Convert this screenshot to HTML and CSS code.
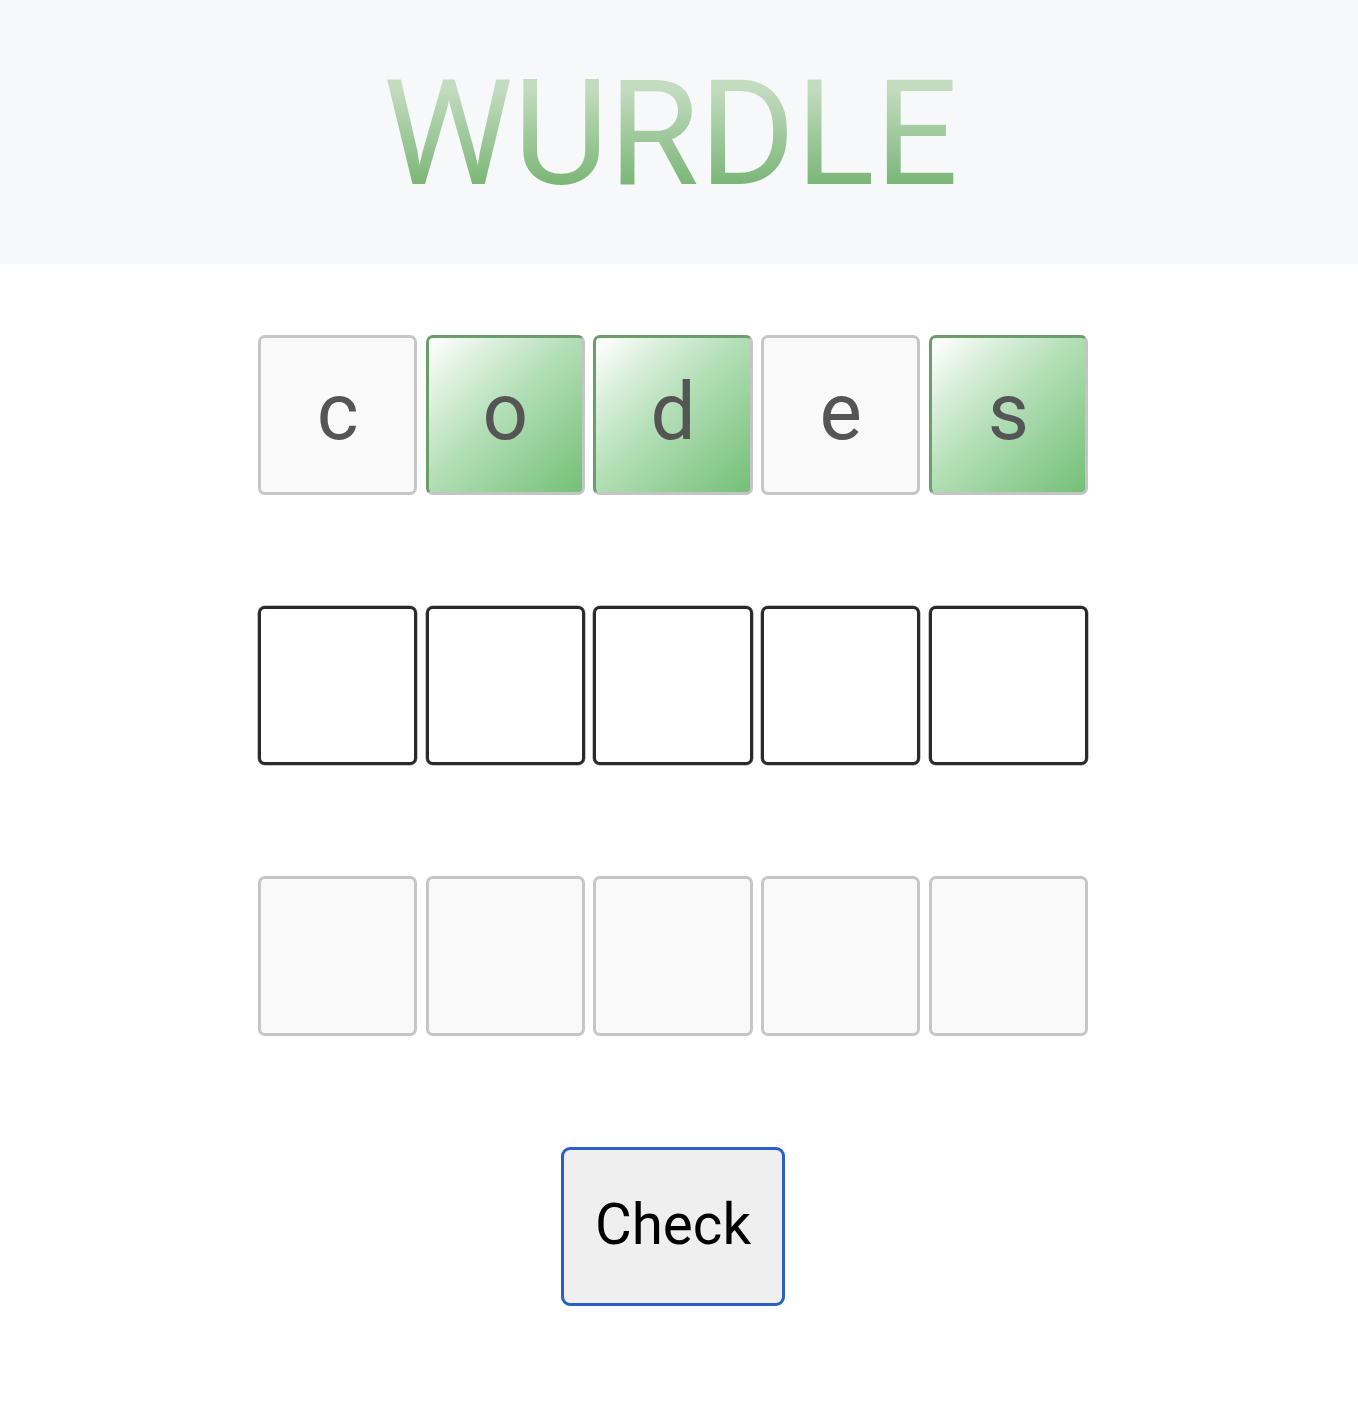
FILE: index.html
```html
<!DOCTYPE html>
<html lang="en">
<head>
<meta charset="utf-8">
<title>Wurdle</title>
<link rel="stylesheet" href="styles.css">
</head>
<body>
<header class="header">
  <h1 class="title">WURDLE</h1>
</header>
<main class="game">
  <div class="board">
    <div class="row">
      <div class="tile">c</div>
      <div class="tile correct">o</div>
      <div class="tile correct">d</div>
      <div class="tile">e</div>
      <div class="tile correct">s</div>
    </div>
    <div class="row">
      <div class="tile active"></div>
      <div class="tile active"></div>
      <div class="tile active"></div>
      <div class="tile active"></div>
      <div class="tile active"></div>
    </div>
    <div class="row">
      <div class="tile"></div>
      <div class="tile"></div>
      <div class="tile"></div>
      <div class="tile"></div>
      <div class="tile"></div>
    </div>
  </div>
  <button class="check" type="button">Check</button>
</main>
</body>
</html>
```
FILE: styles.css
```css
* { box-sizing: border-box; }
html, body { margin: 0; padding: 0; background: #ffffff; }
body { font-family: Roboto, "Liberation Sans", sans-serif; }

.header {
  background: #f7f8fa;
  height: 264px;
  display: flex;
  align-items: center;
  justify-content: center;
  padding-right: 17px;
}
.title {
  margin: 0;
  font-size: 147px;
  font-weight: 400;
  line-height: 1;
  letter-spacing: 0;
  background: linear-gradient(180deg, #c3dcc0 20%, #77b473 88%);
  -webkit-background-clip: text;
  background-clip: text;
  color: transparent;
  padding-top: 4px;
}

.game {
  display: flex;
  flex-direction: column;
  align-items: center;
  padding-top: 71px;
  padding-right: 12px;
  gap: 111px;
}
.board {
  display: flex;
  flex-direction: column;
  gap: 111px;
}
.row {
  display: flex;
  gap: 8.2px;
}
.tile {
  width: 159.5px;
  height: 159.5px;
  border: 3px solid #c6c6c6;
  border-radius: 7px;
  background: #f9f9f9;
  display: flex;
  align-items: center;
  justify-content: center;
  font-size: 80px;
  color: #555555;
  line-height: 1;
  padding-bottom: 6px;
}
.tile.correct {
  background: linear-gradient(135deg, #ffffff 0%, #b6e0b9 45%, #74c077 100%);
  border-color: #6c9e6c #c4c4c4 #c4c4c4 #6c9e6c;
}
.tile.active {
  background: #ffffff;
  border-color: #2a2a2a;
  box-shadow: 0 0 0 0.5px #8a8a8a;
}

.check {
  width: 224px;
  height: 159px;
  border: 3.5px solid #2a5fc8;
  border-radius: 9px;
  background: #efefef;
  font-family: Roboto, "Liberation Sans", sans-serif;
  font-size: 56.5px;
  color: #000000;
  padding: 0;
  padding-bottom: 2px;
}
```
